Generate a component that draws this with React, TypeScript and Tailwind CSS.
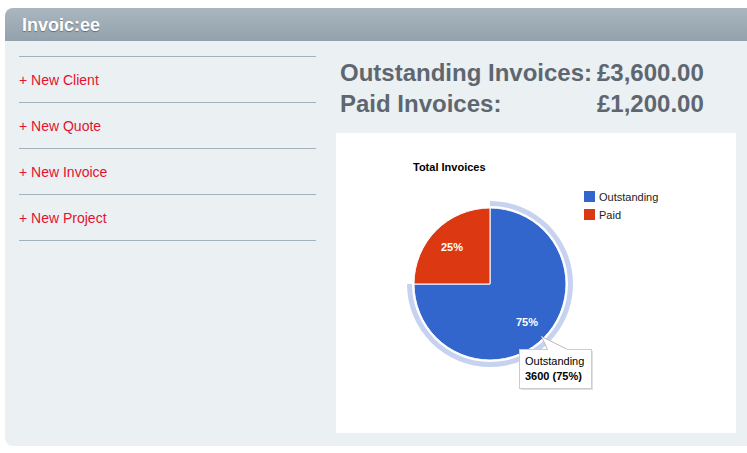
const links = ["New Client", "New Quote", "New Invoice", "New Project"];

function Chart() {
  return (
    <svg width="400" height="300" viewBox="0 0 400 300" className="block">
      <text x="77" y="38" fontSize="11" fontWeight="bold" fill="#000" fontFamily="Liberation Sans, Arial, sans-serif">
        Total Invoices
      </text>

      {/* highlight ring round the hovered slice */}
      <path d="M154,68 A83,83 0 1,1 71,151 L76,151 A78,78 0 1,0 154,73 Z" fill="#c6d2ef" />
      <path d="M154,151 L154,75 A76,76 0 1,1 78,151 Z" fill="#3366cc" stroke="#fff" strokeWidth="1" />
      <path d="M154,151 L78,151 A76,76 0 0,1 154,75 Z" fill="#dc3912" stroke="#fff" strokeWidth="1" />

      <g fontFamily="Liberation Sans, Arial, sans-serif" fontSize="11" fontWeight="bold" fill="#fff" textAnchor="middle">
        <text x="116" y="117.5">25%</text>
        <text x="191" y="192.5">75%</text>
      </g>

      <g fontFamily="Liberation Sans, Arial, sans-serif" fontSize="11" fill="#222">
        <rect x="248" y="58" width="11" height="11" fill="#3366cc" />
        <text x="263" y="67.5">Outstanding</text>
        <rect x="248" y="76" width="11" height="11" fill="#dc3912" />
        <text x="263" y="85.5">Paid</text>
      </g>

      {/* tooltip */}
      <rect x="185" y="218" width="72" height="39" fill="#000" opacity="0.12" />
      <path d="M205.5,203.5 L211.5,216.5 L231.5,216.5 Z" fill="#fff" stroke="#bbb" strokeWidth="1" />
      <rect x="183.5" y="216.5" width="72" height="39" fill="#fff" stroke="#ccc" strokeWidth="1" />
      <rect x="212" y="216" width="19" height="2" fill="#fff" />
      <g fontFamily="Liberation Sans, Arial, sans-serif" fontSize="11" fill="#000">
        <text x="189" y="232">Outstanding</text>
        <text x="189" y="246.5" fontWeight="bold">3600 (75%)</text>
      </g>
    </svg>
  );
}

export default function App() {
  return (
    <div className="h-[453px] w-[747px] overflow-hidden bg-white pl-[5px] pt-[8px] font-['Liberation_Sans',Arial,sans-serif]">
      <div className="w-[760px] overflow-hidden rounded-l-[8px] bg-[#ebf0f3]">
        <div className="flex h-[33px] items-center bg-gradient-to-b from-[#aab7c1] to-[#93a1ac] pl-[17px]">
          <h1 className="text-[18px] font-bold leading-none text-white [text-shadow:0_1px_1px_rgba(0,0,0,0.35)]">
            Invoic:ee
          </h1>
        </div>

        <div className="flex">
          <div className="ml-[14px] w-[297px] pt-[15px]">
            <ul className="border-t border-[#a1b1bd]">
              {links.map((l) => (
                <li key={l} className="flex h-[46px] items-center border-b border-[#a1b1bd]">
                  <a className="text-[14px] leading-none text-[#e4122f]">+ {l}</a>
                </li>
              ))}
            </ul>
          </div>

          <div className="ml-[20px] pb-[13px] pt-[16px]">
            <div className="grid grid-cols-[257px_auto] justify-start pl-[4px] text-[24px] font-bold leading-[31px] text-[#5e6770]">
              <span className="whitespace-nowrap">Outstanding Invoices:</span>
              <span>£3,600.00</span>
              <span>Paid Invoices:</span>
              <span>£1,200.00</span>
            </div>
            <div className="mt-[14px] h-[300px] w-[400px] bg-white">
              <Chart />
            </div>
          </div>
        </div>
      </div>
    </div>
  );
}
